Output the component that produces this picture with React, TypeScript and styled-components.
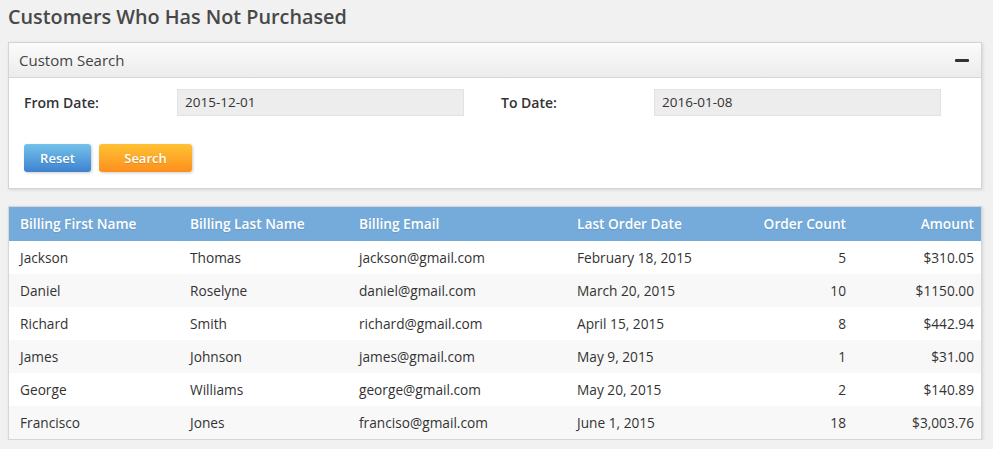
import React from 'react'
import styled, { createGlobalStyle } from 'styled-components'

const GlobalStyle = createGlobalStyle`
  html, body {
    margin: 0;
    padding: 0;
    background: #f1f1f1;
    font-family: "Open Sans", "Liberation Sans", sans-serif;
    color: #444;
  }
`

const Page = styled.div`
  padding: 0 11px 0 8px;
`

const Title = styled.h1`
  margin: 0;
  padding: 3px 0 0 0;
  height: 42px;
  box-sizing: border-box;
  font-size: 19.8px;
  font-weight: 600;
  color: #484848;
`

const Panel = styled.section`
  background: #fff;
  border: 1px solid #d4d4d4;
  box-shadow: 1px 1px 3px rgba(0, 0, 0, 0.12);
`

const PanelHeader = styled.div`
  height: 34px;
  display: flex;
  align-items: center;
  justify-content: space-between;
  padding: 0 12px 0 10px;
  background: linear-gradient(#fbfbfb, #ececec);
  border-bottom: 1px solid #d6d6d6;
  font-size: 15px;
  color: #444;
`

const Minus = styled.span`
  width: 14px;
  height: 3px;
  background: #333;
  border-radius: 1px;
`

const PanelBody = styled.div`
  padding: 10px 15px 16px 15px;
`

const FieldRow = styled.div`
  display: grid;
  grid-template-columns: 153px 287px 37px 153px 287px;
  align-items: center;
  height: 28px;
`

const Label = styled.label`
  font-size: 14px;
  font-weight: 600;
  color: #333;
`

const Input = styled.div`
  height: 27px;
  box-sizing: border-box;
  background: #ededed;
  border: 1px solid #e2e2e2;
  padding: 0 7px;
  display: flex;
  align-items: center;
  font-size: 13.5px;
  color: #333;
`

const Buttons = styled.div`
  display: flex;
  gap: 8px;
  margin-top: 28px;
`

const Button = styled.button<{ $tone: 'blue' | 'orange' }>`
  height: 28px;
  width: ${(p) => (p.$tone === 'blue' ? '67px' : '93px')};
  border: none;
  border-radius: 3px;
  font-family: inherit;
  font-size: 13px;
  font-weight: 600;
  color: #fff;
  text-shadow: 0 1px 1px rgba(0, 0, 0, 0.15);
  box-shadow: 1px 1px 3px rgba(0, 0, 0, 0.2);
  background: ${(p) =>
    p.$tone === 'blue'
      ? 'linear-gradient(#74c2ea, #3e82cf)'
      : 'linear-gradient(#ffc233, #fd8f1e)'};
`

const TableWrap = styled.div`
  margin-top: 17px;
  background: #fff;
  border: 1px solid #d6d6d6;
  box-shadow: 1px 1px 3px rgba(0, 0, 0, 0.12);
`

const Table = styled.table`
  width: 100%;
  table-layout: fixed;
  border-collapse: collapse;
  font-size: 13.7px;
`

const Th = styled.th<{ $right?: boolean; $w?: string }>`
  background: #74abda;
  color: #fff;
  font-weight: 600;
  height: 32px;
  padding: 0 7px 2px 11px;
  text-align: ${(p) => (p.$right ? 'right' : 'left')};
  width: ${(p) => p.$w ?? 'auto'};
  text-shadow: 0 1px 1px rgba(0, 0, 0, 0.1);
`

const Row = styled.tr`
  &:nth-child(even) {
    background: #f8f8f8;
  }
`

const Td = styled.td<{ $right?: boolean }>`
  height: 33px;
  padding: 0 7px 0 11px;
  color: #333;
  text-align: ${(p) => (p.$right ? 'right' : 'left')};
`

const rows = [
  ['Jackson', 'Thomas', 'jackson@gmail.com', 'February 18, 2015', '5', '$310.05'],
  ['Daniel', 'Roselyne', 'daniel@gmail.com', 'March 20, 2015', '10', '$1150.00'],
  ['Richard', 'Smith', 'richard@gmail.com', 'April 15, 2015', '8', '$442.94'],
  ['James', 'Johnson', 'james@gmail.com', 'May 9, 2015', '1', '$31.00'],
  ['George', 'Williams', 'george@gmail.com', 'May 20, 2015', '2', '$140.89'],
  ['Francisco', 'Jones', 'franciso@gmail.com', 'June 1, 2015', '18', '$3,003.76'],
]

export default function App() {
  return (
    <>
      <GlobalStyle />
      <Page>
        <Title>Customers Who Has Not Purchased</Title>
        <Panel>
          <PanelHeader>
            Custom Search
            <Minus />
          </PanelHeader>
          <PanelBody>
            <FieldRow>
              <Label>From Date:</Label>
              <Input>2015-12-01</Input>
              <span />
              <Label>To Date:</Label>
              <Input>2016-01-08</Input>
            </FieldRow>
            <Buttons>
              <Button $tone="blue">Reset</Button>
              <Button $tone="orange">Search</Button>
            </Buttons>
          </PanelBody>
        </Panel>
        <TableWrap>
          <Table>
            <thead>
              <tr>
                <Th $w="152px">Billing First Name</Th>
                <Th $w="151px">Billing Last Name</Th>
                <Th $w="200px">Billing Email</Th>
                <Th $w="132px">Last Order Date</Th>
                <Th $w="119px" $right>Order Count</Th>
                <Th $right>Amount</Th>
              </tr>
            </thead>
            <tbody>
              {rows.map((r) => (
                <Row key={r[2]}>
                  <Td>{r[0]}</Td>
                  <Td>{r[1]}</Td>
                  <Td>{r[2]}</Td>
                  <Td>{r[3]}</Td>
                  <Td $right>{r[4]}</Td>
                  <Td $right>{r[5]}</Td>
                </Row>
              ))}
            </tbody>
          </Table>
        </TableWrap>
      </Page>
    </>
  )
}
